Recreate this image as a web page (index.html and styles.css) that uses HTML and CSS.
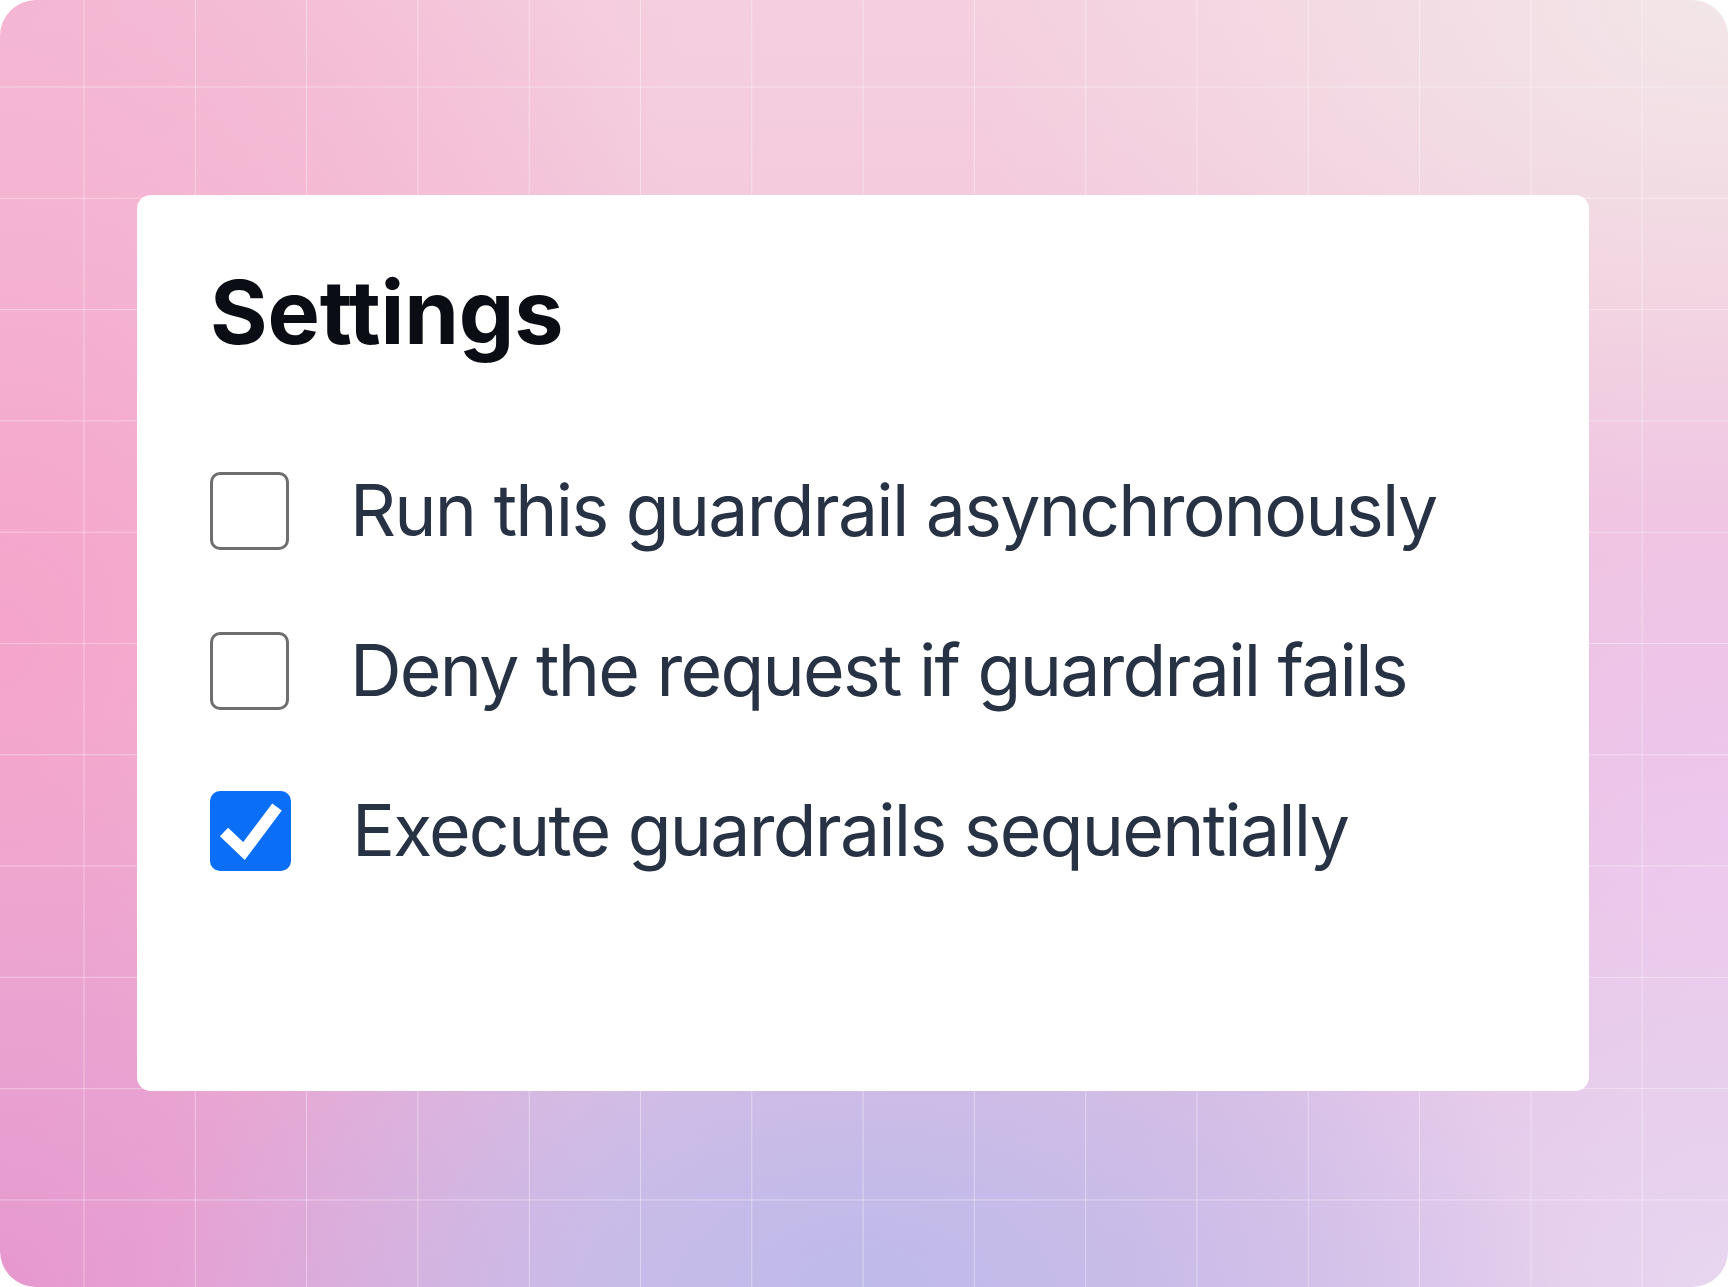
FILE: index.html
```html
<!DOCTYPE html>
<html lang="en">
<head>
<meta charset="utf-8">
<title>Settings</title>
<link rel="stylesheet" href="styles.css">
</head>
<body>
<div class="canvas">
  <section class="card">
    <h1 class="title">Settings</h1>
    <ul class="options">
      <li class="option">
        <span class="box"></span>
        <span class="label">Run this guardrail asynchronously</span>
      </li>
      <li class="option">
        <span class="box"></span>
        <span class="label">Deny the request if guardrail fails</span>
      </li>
      <li class="option">
        <span class="box box-checked">
          <svg viewBox="0 0 80 80" width="80" height="80" aria-hidden="true"><path d="M13 41 L33 60 L66 16" fill="none" stroke="#fff" stroke-width="12" stroke-linejoin="miter"/></svg>
        </span>
        <span class="label">Execute guardrails sequentially</span>
      </li>
    </ul>
  </section>
</div>
</body>
</html>
```

FILE: styles.css
```css
* { box-sizing: border-box; }
html, body { margin: 0; padding: 0; background: #ffffff; }
body { font-family: Inter, "Noto Sans", "Liberation Sans", sans-serif; }

.canvas {
  width: 1728px;
  height: 1287px;
  border-radius: 36px;
  overflow: hidden;
  padding: 195px 139px 0 137px;
  background-color: #efc6df;
  background-image:
    linear-gradient(to right, rgba(255,255,255,0.38) 1px, transparent 1px),
    linear-gradient(to bottom, rgba(255,255,255,0.38) 1px, transparent 1px),
    radial-gradient(ellipse 40% 35% at 50% 100%, rgba(190,186,234,1) 0%, rgba(190,186,234,0) 100%),
    radial-gradient(ellipse 35% 45% at 0% 100%, rgba(231,152,206,1) 0%, rgba(231,152,206,0) 100%),
    radial-gradient(ellipse 45% 75% at 0% 50%, rgba(245,164,202,1) 0%, rgba(245,164,202,0) 100%),
    radial-gradient(ellipse 40% 30% at 0% 0%, rgba(243,192,216,1) 0%, rgba(243,192,216,0) 100%),
    radial-gradient(ellipse 45% 40% at 100% 0%, rgba(242,230,232,1) 0%, rgba(242,230,232,0) 100%),
    radial-gradient(ellipse 35% 40% at 100% 100%, rgba(232,214,240,1) 0%, rgba(232,214,240,0) 100%),
    radial-gradient(ellipse 30% 45% at 100% 65%, rgba(238,198,238,1) 0%, rgba(238,198,238,0) 100%),
    linear-gradient(180deg, #f5cfdf 0%, #f0c3da 45%, #d9bde6 100%);
  background-size:
    111.3px 111.3px,
    111.3px 111.3px,
    100% 100%, 100% 100%, 100% 100%, 100% 100%, 100% 100%, 100% 100%, 100% 100%, 100% 100%;
  background-position:
    83.5px 0,
    0 86.5px,
    0 0, 0 0, 0 0, 0 0, 0 0, 0 0, 0 0, 0 0;
  background-repeat:
    repeat, repeat,
    no-repeat, no-repeat, no-repeat, no-repeat, no-repeat, no-repeat, no-repeat, no-repeat;
}

.card {
  width: 1452px;
  height: 896px;
  background: #ffffff;
  border-radius: 14px;
  padding: 73px 60px 0 73px;
}

.title {
  margin: 0;
  font-size: 88px;
  line-height: 1;
  font-weight: 700;
  color: #0a0d14;
  letter-spacing: -0.2px;
}

.options {
  list-style: none;
  margin: 116px 0 0 0;
  padding: 0;
  display: flex;
  flex-direction: column;
  gap: 82px;
}

.option {
  display: flex;
  align-items: center;
  gap: 61px;
  height: 78px;
}

.box {
  flex: 0 0 auto;
  width: 79px;
  height: 78px;
  border: 3px solid #6e6e70;
  border-radius: 10px;
  background: #fff;
  display: flex;
  align-items: center;
  justify-content: center;
}

.box-checked {
  width: 81px;
  height: 80px;
  border: none;
  background: #0b6ef6;
}

.box-checked svg {
  display: block;
  width: 80px;
  height: 80px;
}

.label {
  font-size: 71.5px;
  line-height: 1;
  font-weight: 400;
  letter-spacing: -1.75px;
  color: #273245;
  white-space: nowrap;
}
```
